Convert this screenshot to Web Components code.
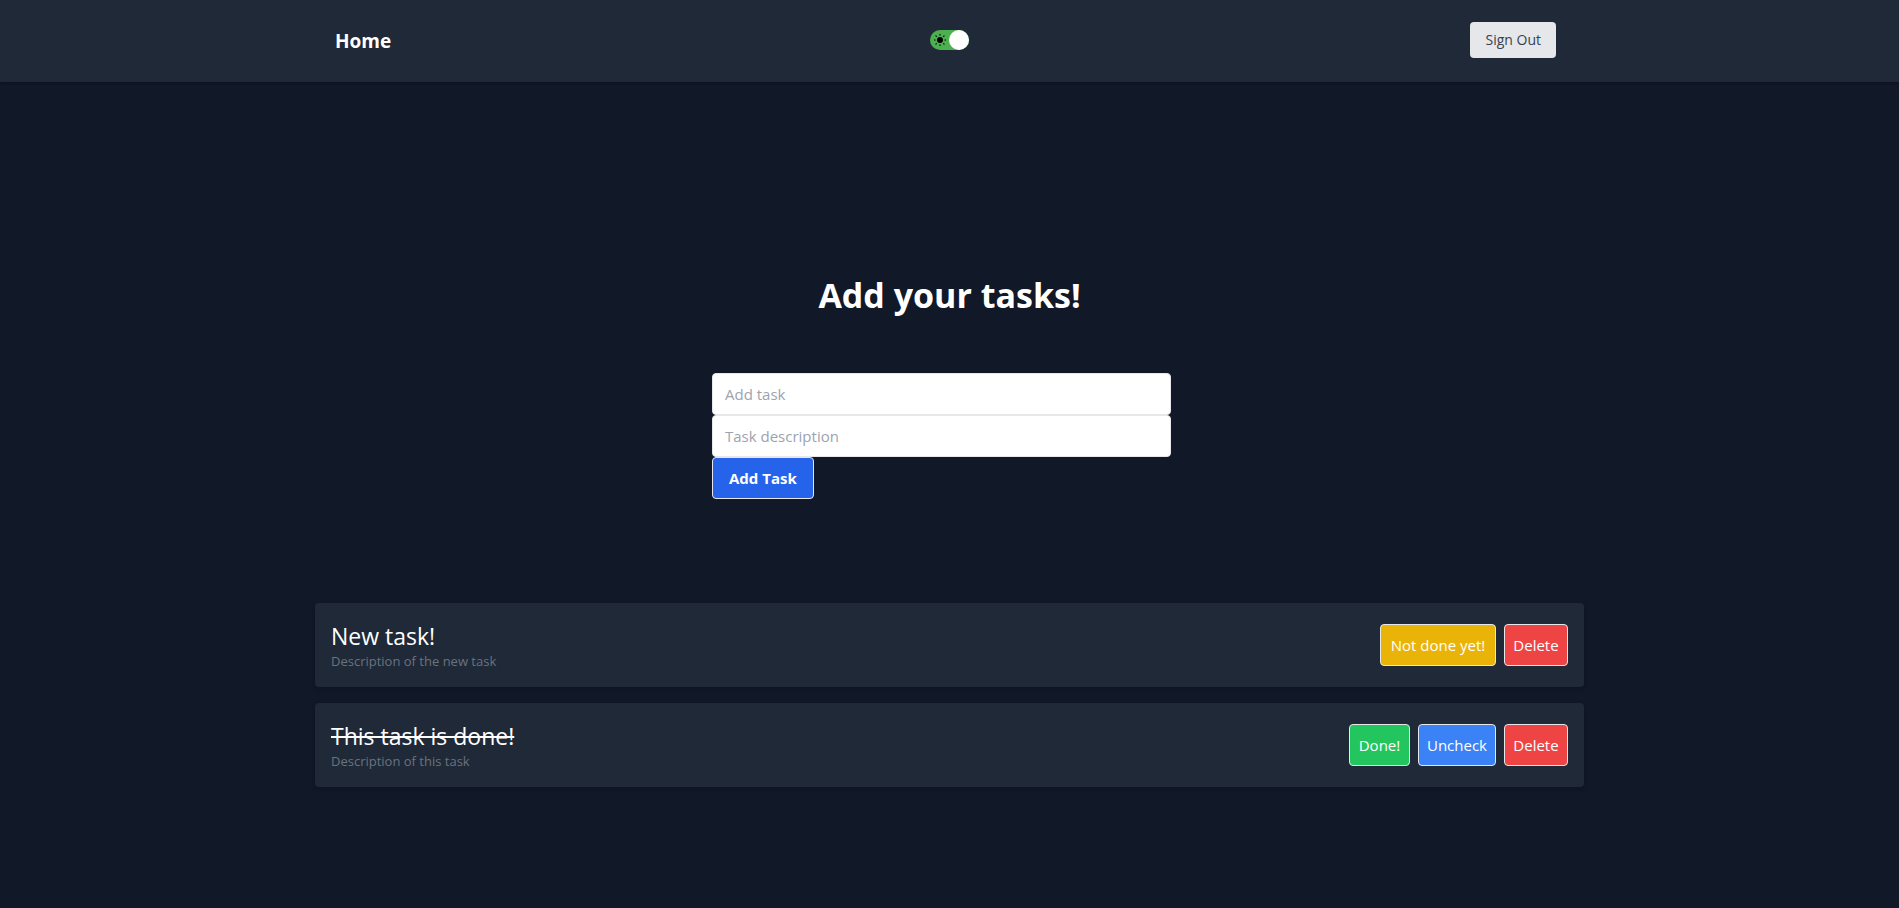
<!DOCTYPE html>
<html lang="en">
<head>
<meta charset="utf-8">
<meta name="viewport" content="width=device-width, initial-scale=1">
<title>Tasks</title>
<style>
  body { margin: 0; background: #111827; color: #fff; font-family: "Segoe UI", "Open Sans", "Noto Sans", sans-serif; font-size: 15px; line-height: 24px; }
</style>
</head>
<body>
<todo-app></todo-app>

<template id="app-template">
  <style>
    :host { display: flex; flex-direction: column; min-height: 100vh; }
    main { display: flex; flex-direction: column; align-items: center; padding: 193px 16px 64px; }
    h1 { margin: 0; font-size: 34px; line-height: 40px; font-weight: 700; }
    task-form { margin: 58px 16px 104px 0; }
    .list { display: flex; flex-direction: column; gap: 16px; width: 100%; max-width: 1269px; }
  </style>
  <nav-bar></nav-bar>
  <main>
    <h1>Add your tasks!</h1>
    <task-form></task-form>
    <div class="list">
      <task-card>
        <span slot="title">New task!</span>
        <span slot="description">Description of the new task</span>
        <action-button slot="actions" tone="yellow">Not done yet!</action-button>
        <action-button slot="actions" tone="red">Delete</action-button>
      </task-card>
      <task-card done>
        <span slot="title">This task is done!</span>
        <span slot="description">Description of this task</span>
        <action-button slot="actions" tone="green">Done!</action-button>
        <action-button slot="actions" tone="blue">Uncheck</action-button>
        <action-button slot="actions" tone="red">Delete</action-button>
      </task-card>
    </div>
  </main>
</template>

<template id="nav-template">
  <style>
    :host { display: block; background: #1f2937; box-shadow: 0 1px 3px rgba(0,0,0,.3); }
    nav { display: grid; grid-template-columns: 1fr auto 1fr; align-items: center; max-width: 1269px; margin: 0 auto; padding: 22px 20px 24px; box-sizing: border-box; }
    a { justify-self: start; padding-top: 2px; color: #fff; text-decoration: none; font-size: 19px; line-height: 28px; font-weight: 700; }
    button { justify-self: end; margin: 0 8px 0 0; padding: 0 15px; height: 36px; border: 0; border-radius: 4px; background: #e5e7eb; color: #374151; font: inherit; font-size: 14px; line-height: 20px; }
  </style>
  <nav>
    <a href="#">Home</a>
    <theme-toggle></theme-toggle>
    <button type="button">Sign Out</button>
  </nav>
</template>

<template id="toggle-template">
  <style>
    :host { display: block; }
    label { display: flex; align-items: center; justify-content: space-between; position: relative; width: 39px; height: 20px; border-radius: 10px; background: #4caf50; }
    input { position: absolute; inset: 0; width: 100%; height: 100%; margin: 0; opacity: 0; }
    svg { display: block; width: 12px; height: 12px; margin-left: 4px; }
    .knob { width: 20px; height: 20px; border-radius: 50%; background: #fff; }
  </style>
  <label>
    <input type="checkbox" checked aria-label="Dark mode">
    <svg viewBox="0 0 12 12" fill="none" stroke="#000" stroke-width="1.1" stroke-linecap="round" aria-hidden="true">
      <circle cx="6" cy="6" r="3" fill="#000" stroke="none"/>
      <path d="M6 .3v.8M6 10.9v.8M.3 6h.8M10.9 6h.8M1.9 1.9l.5.5M9.6 9.6l.5.5M1.9 10.1l.5-.5M9.6 2.4l.5-.5"/>
    </svg>
    <span class="knob"></span>
  </label>
</template>

<template id="form-template">
  <style>
    :host { display: block; width: 459px; max-width: 100%; }
    form { display: flex; flex-direction: column; align-items: flex-start; }
    input { box-sizing: border-box; width: 100%; height: 42px; margin: 0; padding: 8px 12px; border: 1px solid #e5e7eb; border-radius: 4px; background: #fff; color: #111827; font: inherit; }
    input::placeholder { color: #9ca3af; opacity: 1; }
    button { height: 42px; margin: 0; padding: 0 16px; border: 1px solid #e5e7eb; border-radius: 4px; background: #2563eb; color: #fff; font: inherit; font-weight: 700; }
  </style>
  <form>
    <input type="text" placeholder="Add task" aria-label="Add task">
    <input type="text" placeholder="Task description" aria-label="Task description">
    <button type="button">Add Task</button>
  </form>
</template>

<template id="card-template">
  <style>
    :host { display: flex; align-items: center; justify-content: space-between; box-sizing: border-box; min-height: 84px; padding: 16px; border-radius: 4px; background: #1f2937; box-shadow: 0 2px 4px rgba(0,0,0,.2); }
    .title { padding-top: 2px; font-size: 23px; line-height: 30px; }
    :host([done]) .title { text-decoration: line-through; text-decoration-thickness: 2px; }
    .description { font-size: 13px; line-height: 20px; color: #6b7280; }
    .actions { display: flex; gap: 8px; }
  </style>
  <div>
    <div class="title"><slot name="title"></slot></div>
    <div class="description"><slot name="description"></slot></div>
  </div>
  <div class="actions"><slot name="actions"></slot></div>
</template>

<template id="action-template">
  <style>
    :host { display: block; }
    button { min-width: var(--width, 64px); height: 42px; margin: 0; padding: 0 8px; border: 1px solid #e5e7eb; border-radius: 4px; background: var(--tone); color: #fff; font: inherit; white-space: nowrap; }
    :host([tone="yellow"]) { --tone: #eab308; --width: 116px; }
    :host([tone="red"]) { --tone: #ef4444; }
    :host([tone="green"]) { --tone: #22c55e; --width: 61px; }
    :host([tone="blue"]) { --tone: #3b82f6; --width: 78px; }
  </style>
  <button type="button"><slot></slot></button>
</template>

<script>
  const define = (name, templateId) => customElements.define(name, class extends HTMLElement {
    constructor() {
      super();
      this.attachShadow({ mode: "open" })
        .append(document.getElementById(templateId).content.cloneNode(true));
    }
  });
  define("action-button", "action-template");
  define("task-card", "card-template");
  define("task-form", "form-template");
  define("theme-toggle", "toggle-template");
  define("nav-bar", "nav-template");
  define("todo-app", "app-template");
</script>
</body>
</html>
